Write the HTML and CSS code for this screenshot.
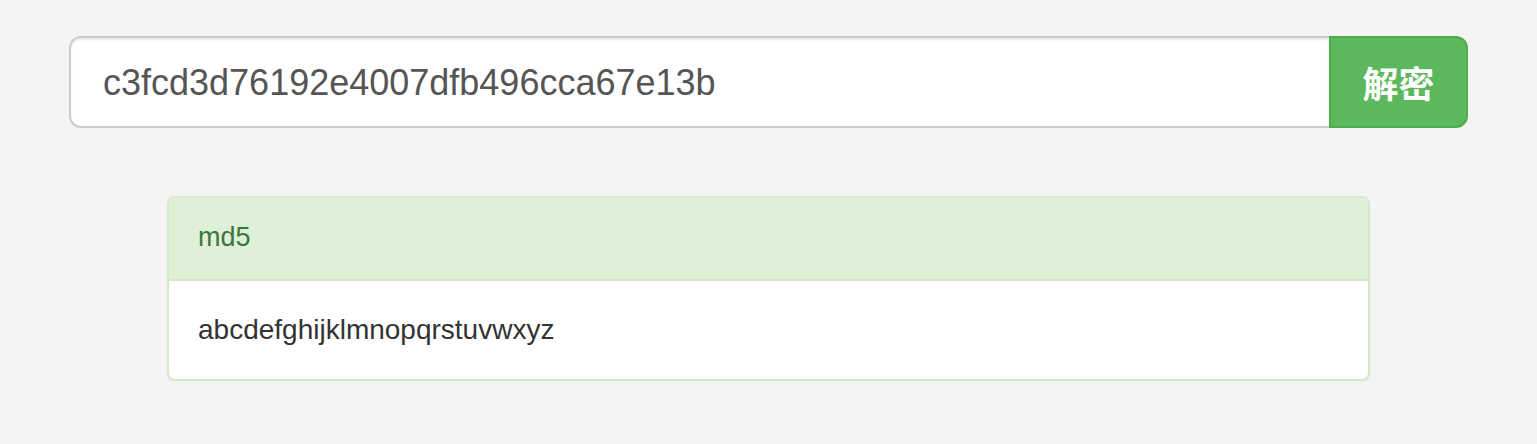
FILE: index.html
```html
<!DOCTYPE html>
<html lang="zh">
<head>
<meta charset="utf-8">
<title>md5</title>
<link rel="stylesheet" href="styles.css">
</head>
<body>
<div class="page">
  <form class="input-group">
    <input class="hash-input" type="text" value="c3fcd3d76192e4007dfb496cca67e13b">
    <button class="btn-decrypt" type="button">解密</button>
  </form>
  <div class="panel">
    <div class="panel-heading">md5</div>
    <div class="panel-body">abcdefghijklmnopqrstuvwxyz</div>
  </div>
</div>
</body>
</html>
```
FILE: styles.css
```css
* { box-sizing: border-box; }
html, body {
  margin: 0;
  background: #f4f4f4;
  font-family: "Liberation Sans", Arial, "Noto Sans CJK SC", sans-serif;
}
.page {
  padding: 36px 69px 0;
}
.input-group {
  display: flex;
  margin: 0;
}
.hash-input {
  flex: 1;
  min-width: 0;
  height: 92px;
  padding: 21px 32px 19px;
  font-family: "Liberation Sans", Arial, sans-serif;
  font-size: 36px;
  color: #555;
  background: #fff;
  border: 2px solid #ccc;
  border-right: 0;
  border-radius: 12px 0 0 12px;
  box-shadow: inset 0 2px 2px rgba(0,0,0,.075);
  outline: none;
}
.btn-decrypt {
  height: 92px;
  width: 139px;
  padding: 0;
  font-family: "Liberation Sans", "Noto Sans CJK SC", sans-serif;
  font-size: 36px;
  font-weight: bold;
  color: #fff;
  background: #5cb85c;
  border: 2px solid #4cae4c;
  border-radius: 0 12px 12px 0;
}
.panel {
  margin: 68px 98px 0;
  background: #fff;
  border: 2px solid #d6e9c6;
  border-radius: 8px;
  box-shadow: 0 2px 2px rgba(0,0,0,.05);
  overflow: hidden;
}
.panel-heading {
  padding: 19px 29px 21px;
  height: 83px;
  line-height: 40px;
  font-size: 27px;
  color: #3c763d;
  background: #dff0d8;
  border-bottom: 2px solid #d6e9c6;
}
.panel-body {
  padding: 29px 29px;
  line-height: 40px;
  font-size: 28px;
  color: #333;
}
```
